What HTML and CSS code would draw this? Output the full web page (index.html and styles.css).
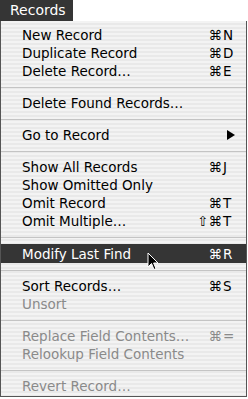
FILE: index.html
```
<html>

<head>
    <meta charset="UTF-8">
    <title>Records menu</title>
    <link rel="stylesheet" href="styles.css">
</head>

<body>
    <div id="menubar">
        <div class="title">Records</div>
    </div>
    <ul id="menu">
        <li class="item"><span class="label">New Record</span><span class="key"><span class="mods">⌘</span><span class="letter">N</span></span></li>
        <li class="item"><span class="label">Duplicate Record</span><span class="key"><span class="mods">⌘</span><span class="letter">D</span></span></li>
        <li class="item"><span class="label">Delete Record…</span><span class="key"><span class="mods">⌘</span><span class="letter">E</span></span></li>
        <li class="sep"></li>
        <li class="item"><span class="label">Delete Found Records…</span></li>
        <li class="sep"></li>
        <li class="item"><span class="label">Go to Record</span>
            <svg class="arrow" width="8" height="10" viewBox="0 0 8 10"><path d="M0 0 L8 5 L0 10 Z" fill="#000"></path></svg>
        </li>
        <li class="sep"></li>
        <li class="item"><span class="label">Show All Records</span><span class="key"><span class="mods">⌘</span><span class="letter">J</span></span></li>
        <li class="item"><span class="label">Show Omitted Only</span></li>
        <li class="item"><span class="label">Omit Record</span><span class="key"><span class="mods">⌘</span><span class="letter">T</span></span></li>
        <li class="item"><span class="label">Omit Multiple…</span><span class="key"><span class="mods">⇧⌘</span><span class="letter">T</span></span></li>
        <li class="sep"></li>
        <li class="item selected"><span class="label">Modify Last Find</span><span class="key"><span class="mods">⌘</span><span class="letter">R</span></span></li>
        <li class="sep"></li>
        <li class="item"><span class="label">Sort Records…</span><span class="key"><span class="mods">⌘</span><span class="letter">S</span></span></li>
        <li class="item disabled"><span class="label">Unsort</span></li>
        <li class="sep"></li>
        <li class="item disabled"><span class="label">Replace Field Contents…</span><span class="key"><span class="mods">⌘</span><span class="letter">=</span></span></li>
        <li class="item disabled"><span class="label">Relookup Field Contents</span></li>
        <li class="sep"></li>
        <li class="item disabled"><span class="label">Revert Record…</span></li>
    </ul>
    <!-- mouse pointer resting on the highlighted item -->
    <svg class="cursor" width="12" height="19" viewBox="0 0 12 19">
        <path d="M1 1 L1 15 L4.5 11.5 L7 17.5 L9 16.6 L6.6 11 L11 11 Z" fill="#000" stroke="#fff" stroke-width="1" stroke-linejoin="round"></path>
    </svg>
</body>

</html>
```

FILE: styles.css
```
body {
    margin: 0;
    background: #fff;
    font-family: "DejaVu Sans", "Liberation Sans", sans-serif;
    position: relative;
}

#menubar {
    height: 21px;
}

#menubar .title {
    width: 73px;
    height: 21px;
    box-sizing: border-box;
    padding-left: 10px;
    padding-top: 1px;
    background: #353535;
    color: #fff;
    font-size: 14px;
    line-height: 19px;
}

#menu {
    list-style: none;
    margin: 0;
    padding: 5px 0 1px 0;
    width: 247px;
    box-sizing: border-box;
    border: 1px solid #555;
    border-top: none;
    background: repeating-linear-gradient(#f3f3f3 0, #f3f3f3 2px, #e9e9e9 2px, #e9e9e9 4px);
    font-size: 13.5px;
    color: #000;
}

.item {
    display: flex;
    align-items: center;
    height: 18px;
    padding-left: 21px;
    padding-right: 10px;
}

.item .label {
    flex: 1;
}

.key {
    display: flex;
}

.mods {
    text-align: right;
}

.letter {
    width: 13px;
    padding-left: 1px;
}

.arrow {
    margin-right: 1px;
}

.selected {
    height: 19px;
    background: #353535;
    color: #fff;
}

.disabled {
    color: #8a8a8a;
}

.sep {
    height: 1px;
    margin: 7px 0 6px 0;
    background: #c4c4c4;
}

.cursor {
    position: absolute;
    left: 147px;
    top: 252px;
}
```
